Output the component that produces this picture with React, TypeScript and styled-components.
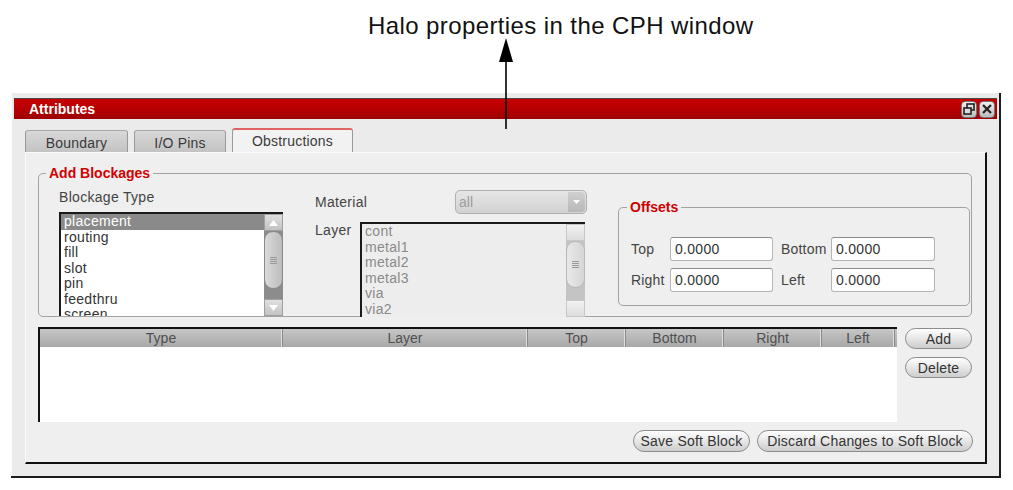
import React from 'react';
import styled, { createGlobalStyle } from 'styled-components';

const GlobalStyle = createGlobalStyle`
  html, body {
    margin: 0;
    padding: 0;
    background: #fff;
  }
  body {
    width: 1013px;
    height: 490px;
    overflow: hidden;
    font-family: 'Liberation Sans', Arial, sans-serif;
  }
  * {
    box-sizing: border-box;
  }
`;

const blockageTypes = ['placement', 'routing', 'fill', 'slot', 'pin', 'feedthru', 'screen'];
const layers = ['cont', 'metal1', 'metal2', 'metal3', 'via', 'via2'];
const columns = [
  { name: 'Type', width: 243 },
  { name: 'Layer', width: 245 },
  { name: 'Top', width: 98 },
  { name: 'Bottom', width: 98 },
  { name: 'Right', width: 98 },
  { name: 'Left', width: 73 },
];

function Arrow() {
  return (
    <ArrowMark width="14" height="91" viewBox="0 0 14 91">
      <polygon points="7,0 0,24 14,24" fill="#000" />
      <line x1="7" y1="22" x2="7" y2="91" stroke="#000" strokeWidth="1.6" />
    </ArrowMark>
  );
}

function ScrollBar({ $disabled }: { $disabled?: boolean }) {
  return (
    <Scroll $disabled={$disabled}>
      <ScrollButton $disabled={$disabled}>
        {!$disabled && (
          <svg width="11" height="8" viewBox="0 0 11 8">
            <polygon points="5.5,1 10,7 1,7" fill="#fff" />
          </svg>
        )}
      </ScrollButton>
      <Track $disabled={$disabled}>
        <Thumb $disabled={$disabled}>
          <Grip />
        </Thumb>
      </Track>
      <ScrollButton $disabled={$disabled}>
        {!$disabled && (
          <svg width="11" height="8" viewBox="0 0 11 8">
            <polygon points="1,1 10,1 5.5,7" fill="#fff" />
          </svg>
        )}
      </ScrollButton>
    </Scroll>
  );
}

export default function App() {
  return (
    <Page>
      <GlobalStyle />
      <Caption>Halo properties in the CPH window</Caption>
      <Arrow />
      <Window>
        <TitleBar>
          <Title>Attributes</Title>
          <TitleButtons>
            <TitleButton>
              <svg width="12" height="12" viewBox="0 0 12 12">
                <rect x="4" y="1" width="7" height="6" fill="none" stroke="#222" strokeWidth="1.6" />
                <rect x="1" y="5" width="7" height="6" fill="#ddd" stroke="#222" strokeWidth="1.6" />
              </svg>
            </TitleButton>
            <TitleButton>
              <svg width="12" height="12" viewBox="0 0 12 12">
                <path d="M2 2 L10 10 M10 2 L2 10" stroke="#222" strokeWidth="2.2" />
              </svg>
            </TitleButton>
          </TitleButtons>
        </TitleBar>

        <Body>
          <TabRow>
            <Tab $width={103}>Boundary</Tab>
            <Tab $width={92}>I/O Pins</Tab>
            <Tab $width={121} $active>
              Obstructions
            </Tab>
          </TabRow>

          <Panel>
            <GroupBox $height={153}>
              <Legend $offset={7}>Add Blockages</Legend>
              <BlockageRow>
                <BlockageColumn>
                  <FieldLabel>Blockage Type</FieldLabel>
                  <ListBox $width={224} $height={104}>
                    <ListItems>
                      {blockageTypes.map((t, i) => (
                        <ListItem key={t} $selected={i === 0}>
                          {t}
                        </ListItem>
                      ))}
                    </ListItems>
                    <ScrollBar />
                  </ListBox>
                </BlockageColumn>

                <MaterialColumn>
                  <MaterialRow>
                    <InlineLabel $width={140}>Material</InlineLabel>
                    <Combo>
                      <span>all</span>
                      <ComboButton>
                        <svg width="7" height="4" viewBox="0 0 7 4">
                          <polygon points="0,0 7,0 3.5,4" fill="#fff" />
                        </svg>
                      </ComboButton>
                    </Combo>
                  </MaterialRow>
                  <LayerRow>
                    <InlineLabel $width={45}>Layer</InlineLabel>
                    <ListBox $width={225} $height={95} $disabled>
                      <ListItems>
                        {layers.map((l) => (
                          <ListItem key={l} $disabled>
                            {l}
                          </ListItem>
                        ))}
                      </ListItems>
                      <ScrollBar $disabled />
                    </ListBox>
                  </LayerRow>
                </MaterialColumn>

                <OffsetsBox $height={108}>
                  <Legend $offset={8}>Offsets</Legend>
                  <OffsetsGrid>
                    <OffsetLabel>Top</OffsetLabel>
                    <NumberInput defaultValue="0.0000" />
                    <OffsetLabel $indent>Bottom</OffsetLabel>
                    <NumberInput defaultValue="0.0000" />
                    <OffsetLabel>Right</OffsetLabel>
                    <NumberInput defaultValue="0.0000" />
                    <OffsetLabel $indent>Left</OffsetLabel>
                    <NumberInput defaultValue="0.0000" />
                  </OffsetsGrid>
                </OffsetsBox>
              </BlockageRow>
            </GroupBox>

            <TableRow>
              <Table>
                <TableHeader>
                  {columns.map((c) => (
                    <HeaderCell key={c.name} $width={c.width}>
                      {c.name}
                    </HeaderCell>
                  ))}
                </TableHeader>
              </Table>
              <SideButtons>
                <PillButton $width={67}>Add</PillButton>
                <PillButton $width={67}>Delete</PillButton>
              </SideButtons>
            </TableRow>

            <Footer>
              <PillButton $width={117} $tall>
                Save Soft Block
              </PillButton>
              <PillButton $width={216} $tall>
                Discard Changes to Soft Block
              </PillButton>
            </Footer>
          </Panel>
        </Body>
      </Window>
    </Page>
  );
}

const Page = styled.div`
  position: relative;
  width: 1013px;
  height: 490px;
`;

const Caption = styled.div`
  height: 93px;
  padding: 12px 0 0 368px;
  font-size: 24px;
  line-height: 28px;
  letter-spacing: 0.4px;
  color: #111;
`;

const ArrowMark = styled.svg`
  position: absolute;
  left: 499px;
  top: 38px;
  z-index: 2;
`;

const Window = styled.div`
  margin-left: 11px;
  width: 990px;
  height: 385px;
  padding: 5px 1px 0 3px;
  background: #ebebeb;
  border-right: 2px solid #1c1c1c;
  border-bottom: 2px solid #1c1c1c;
  box-shadow: inset 1px 0 #fafafa;
`;

const TitleBar = styled.div`
  height: 21px;
  margin-right: 1px;
  display: flex;
  align-items: center;
  justify-content: space-between;
  padding: 0 2px 0 15px;
  background: linear-gradient(#c80000, #b30000 60%, #9c0000);
  border-top: 1px solid #4a4a4a;
`;

const Title = styled.span`
  color: #fff;
  font-size: 14px;
  font-weight: 700;
`;

const TitleButtons = styled.div`
  display: flex;
  gap: 2px;
`;

const TitleButton = styled.div`
  width: 16px;
  height: 17px;
  display: flex;
  align-items: center;
  justify-content: center;
  border-radius: 4px;
  border: 1px solid #777;
  background: linear-gradient(#f0f0f0, #bcbcbc);
`;

const Body = styled.div`
  padding: 9px 11px 0 11px;
`;

const TabRow = styled.div`
  display: flex;
  align-items: flex-end;
  gap: 6px;
  height: 24px;
`;

const Tab = styled.div<{ $width: number; $active?: boolean }>`
  width: ${(p) => p.$width}px;
  height: ${(p) => (p.$active ? 24 : 22)}px;
  display: flex;
  align-items: center;
  justify-content: center;
  font-size: 14px;
  letter-spacing: 0.2px;
  color: #3a3a3a;
  border: 1px solid #9a9a9a;
  border-bottom: none;
  border-top: ${(p) => (p.$active ? '2px solid #e06464' : '1px solid #a6a6a6')};
  border-radius: 3px 3px 0 0;
  background: ${(p) => (p.$active ? '#f2f2f2' : 'linear-gradient(#d8d8d8, #c3c3c3)')};
  padding-top: ${(p) => (p.$active ? 0 : 3)}px;
`;

const Panel = styled.div`
  width: 962px;
  height: 312px;
  padding: 11px 13px 0 12px;
  background: #efefef;
  border-left: 1px solid #fbfbfb;
  border-top: 1px solid #fbfbfb;
  border-right: 2px solid #111;
  border-bottom: 2px solid #111;
`;

const GroupBox = styled.fieldset<{ $height: number }>`
  margin: 0;
  padding: 0;
  min-width: 0;
  height: ${(p) => p.$height}px;
  border: 1px solid #a2a2a2;
  border-radius: 5px;
`;

const Legend = styled.legend<{ $offset: number }>`
  margin-left: ${(p) => p.$offset}px;
  padding: 0 3px;
  font-size: 14px;
  line-height: 18px;
  font-weight: 700;
  color: #d20000;
`;

const BlockageRow = styled.div`
  display: flex;
  align-items: flex-start;
  padding-left: 20px;
`;

const BlockageColumn = styled.div`
  width: 224px;
`;

const FieldLabel = styled.div`
  margin: 7px 0 6px;
  font-size: 14px;
  line-height: 17px;
  letter-spacing: 0.3px;
  color: #444;
`;

const ListBox = styled.div<{ $width: number; $height: number; $disabled?: boolean }>`
  width: ${(p) => p.$width}px;
  height: ${(p) => p.$height}px;
  display: flex;
  overflow: hidden;
  border-top: 2px solid #1a1a1a;
  border-left: 2px solid #1a1a1a;
  background: ${(p) => (p.$disabled ? '#ededed' : '#fff')};
`;

const ListItems = styled.div`
  flex: 1;
  overflow: hidden;
`;

const ListItem = styled.div<{ $selected?: boolean; $disabled?: boolean }>`
  height: 15.5px;
  line-height: 15.5px;
  padding-left: 3px;
  font-size: 14px;
  letter-spacing: 0.3px;
  white-space: nowrap;
  color: ${(p) => (p.$selected ? '#fff' : p.$disabled ? '#8a8a8a' : '#333')};
  background: ${(p) => (p.$selected ? '#8a8a8a' : 'transparent')};
`;

const Scroll = styled.div<{ $disabled?: boolean }>`
  width: 19px;
  display: flex;
  flex-direction: column;
  background: ${(p) => (p.$disabled ? '#c4c4c4' : '#8c8c8c')};
`;

const ScrollButton = styled.div<{ $disabled?: boolean }>`
  height: 17px;
  display: flex;
  align-items: center;
  justify-content: center;
  border: 1px solid ${(p) => (p.$disabled ? '#c8c8c8' : '#a0a0a0')};
  background: ${(p) => (p.$disabled ? 'linear-gradient(#f2f2f2, #dcdcdc)' : 'linear-gradient(#e0e0e0, #c2c2c2)')};
`;

const Track = styled.div<{ $disabled?: boolean }>`
  flex: 1;
  padding: 0 0 ${(p) => (p.$disabled ? 12 : 10)}px;
  display: flex;
`;

const Thumb = styled.div<{ $disabled?: boolean }>`
  flex: 1;
  display: flex;
  align-items: center;
  justify-content: center;
  border-radius: 9px;
  border: 1px solid ${(p) => (p.$disabled ? '#b8b8b8' : '#8a8a8a')};
  background: ${(p) => (p.$disabled ? 'linear-gradient(90deg, #e8e8e8, #d6d6d6)' : 'linear-gradient(90deg, #dadada, #bdbdbd)')};
`;

const Grip = styled.div`
  width: 7px;
  height: 7px;
  background: repeating-linear-gradient(#9a9a9a 0 1px, transparent 1px 2px);
`;

const MaterialColumn = styled.div`
  width: 272px;
  margin-left: 32px;
`;

const MaterialRow = styled.div`
  display: flex;
  align-items: center;
  height: 24px;
  margin-top: 8px;
`;

const InlineLabel = styled.div<{ $width: number }>`
  width: ${(p) => p.$width}px;
  flex-shrink: 0;
  font-size: 14px;
  line-height: 17px;
  letter-spacing: 0.3px;
  color: #444;
`;

const Combo = styled.div`
  width: 132px;
  height: 24px;
  display: flex;
  align-items: center;
  justify-content: space-between;
  padding: 0 1px 0 3px;
  border: 1px solid #b0b0b0;
  border-radius: 5px;
  background: linear-gradient(#e6e6e6, #d2d2d2);
  font-size: 14px;
  color: #9c9c9c;
`;

const ComboButton = styled.div`
  width: 17px;
  height: 20px;
  display: flex;
  align-items: center;
  justify-content: center;
  border-radius: 0 4px 4px 0;
  background: linear-gradient(#cfcfcf, #b8b8b8);
`;

const LayerRow = styled.div`
  display: flex;
  align-items: flex-start;
  margin-top: 8px;
`;

const OffsetsBox = styled(GroupBox)`
  width: 352px;
  margin-left: 31px;
  margin-top: 16px;
  flex-shrink: 0;
`;

const OffsetsGrid = styled.div`
  display: grid;
  grid-template-columns: 39px 103px 58px 104px;
  row-gap: 7px;
  align-items: center;
  padding: 21px 0 0 12px;
`;

const OffsetLabel = styled.div<{ $indent?: boolean }>`
  padding-left: ${(p) => (p.$indent ? 8 : 0)}px;
  font-size: 14px;
  letter-spacing: 0.2px;
  color: #444;
`;

const NumberInput = styled.input`
  width: 100%;
  height: 24px;
  padding: 0 0 0 4px;
  border: 1px solid #b4b4b4;
  border-top-color: #8c8c8c;
  border-radius: 3px;
  background: #fff;
  font-family: 'Liberation Sans', Arial, sans-serif;
  font-size: 14px;
  letter-spacing: 0.3px;
  color: #333;
  outline: none;
`;

const TableRow = styled.div`
  display: flex;
  align-items: flex-start;
  margin-top: 10px;
`;

const Table = styled.div`
  width: 860px;
  height: 95px;
  border-top: 2px solid #111;
  border-left: 2px solid #111;
  background: #fff;
`;

const TableHeader = styled.div`
  display: flex;
  height: 18px;
  background: linear-gradient(#c6c6c6, #a8a8a8);
`;

const HeaderCell = styled.div<{ $width: number }>`
  width: ${(p) => p.$width}px;
  font-size: 14px;
  line-height: 18px;
  text-align: center;
  color: #505050;
  border-right: 1px solid #8a8a8a;
  box-shadow: inset -1px 0 #dedede;
`;

const SideButtons = styled.div`
  display: flex;
  flex-direction: column;
  gap: 8px;
  margin: 1px 0 0 8px;
`;

const PillButton = styled.button<{ $width: number; $tall?: boolean }>`
  width: ${(p) => p.$width}px;
  height: ${(p) => (p.$tall ? 22 : 21)}px;
  padding: 0;
  border: 1px solid #8c8c8c;
  border-radius: 11px;
  background: linear-gradient(#fefefe, #e4e4e4 55%, #cdcdcd);
  font-family: 'Liberation Sans', Arial, sans-serif;
  font-size: 14px;
  letter-spacing: 0.2px;
  color: #333;
`;

const Footer = styled.div`
  display: flex;
  justify-content: flex-end;
  gap: 7px;
  margin: 8px -1px 0 0;
`;
